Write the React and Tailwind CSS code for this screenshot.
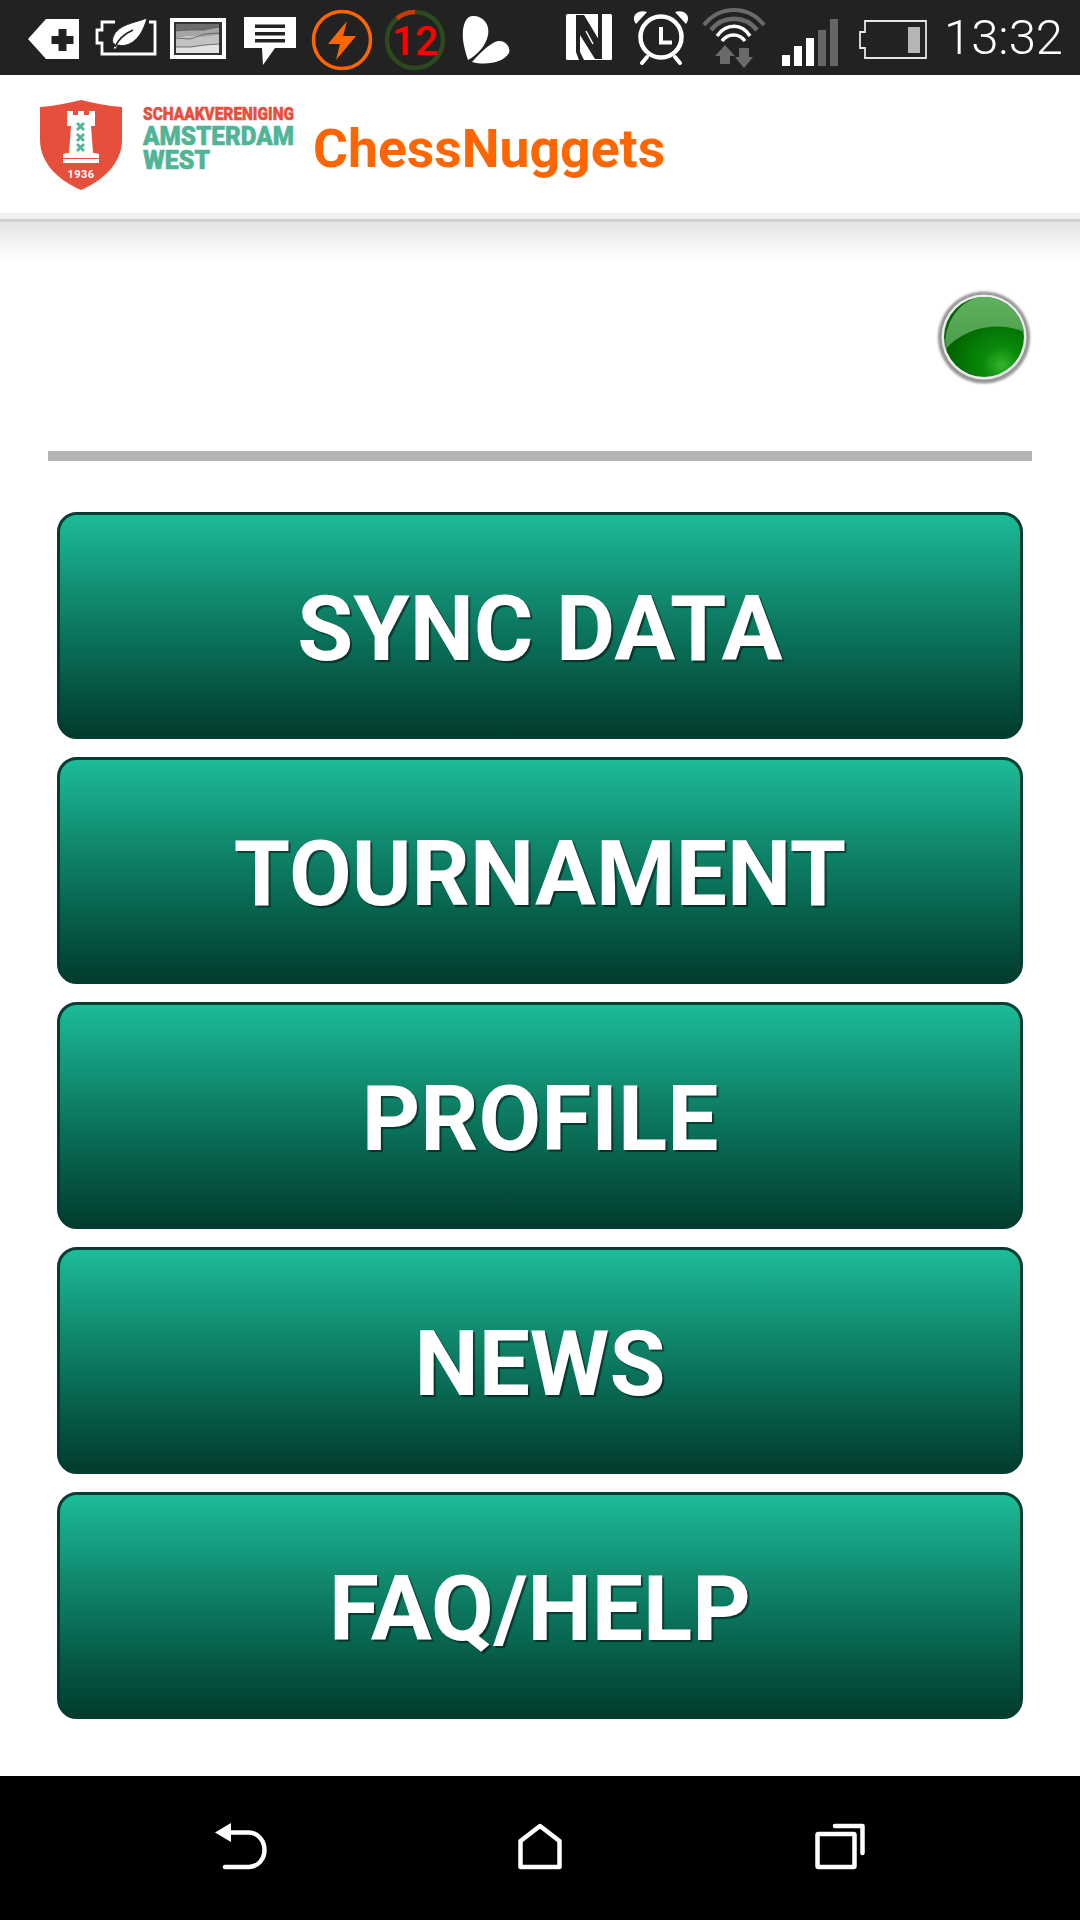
import React from 'react';

const FONT = "font-['Roboto','Liberation_Sans',sans-serif]";

// every status icon is drawn in page coordinates, so the cells just sit next to each other
const Cell = ({ x, w, children }) => (
  <svg width={w} height={75} viewBox={`${x} 0 ${w} 75`} className="shrink-0">
    {children}
  </svg>
);

const StatusBar = () => (
  <div className="flex h-[75px] shrink-0 items-center bg-[#222222] pl-[20px]">
    <Cell x={20} w={70}>
      <path d="M28 39 46 19H79V59H46Z" fill="#fff" />
      <path d="M58.500 29h8v7h7v8h-7v7h-8v-7h-7v-8h7z" fill="#222" />
    </Cell>
    <Cell x={90} w={72}>
      <path d="M115 22H102V30H97V43H102V54H155V22H149" fill="none" stroke="#fff" strokeWidth="2.800" />
      <path d="M147 18C135 23 118 24 113 37 112 42 113 44 115 44L113 49H116L118 45C130 48 142 38 147 18Z" fill="#fff" stroke="#222" strokeWidth="1" />
      <path d="M115 47C118 40 124 34 133 30" fill="none" stroke="#222" strokeWidth="1.800" />
    </Cell>
    <Cell x={162} w={73}>
      <rect x="170" y="18" width="56" height="41" fill="#fff" />
      <rect x="174" y="22" width="48" height="33" fill="#333" />
      <rect x="176" y="24" width="43" height="29" fill="#e2e2e2" />
      <path d="M176 24H219V27L204 30 190 30 176 31Z" fill="#6c6c6c" />
      <path d="M176 31 190 30 204 30 219 27V35L205 37 190 36 176 38Z" fill="#a5a5a5" />
      <path d="M176 38 190 36 205 37 219 35V44L205 45 190 47 176 47Z" fill="#c2c2c2" />
      <path d="M176 31 190 30 204 30 219 27M176 38 190 39 205 34 219 33M176 47 190 47 205 45 219 44" fill="none" stroke="#555" strokeWidth="0.800" />
    </Cell>
    <Cell x={235} w={70}>
      <path d="M244 17H296V48H275L263 65 262 48H244Z" fill="#fff" />
      <path d="M255 24.500H285V28H255ZM255 32H285V35.500H255ZM255 39H285V42.500H255Z" fill="#222" />
    </Cell>
    <Cell x={305} w={73}>
      <circle cx="342" cy="40" r="28.500" fill="none" stroke="#ff6600" strokeWidth="3.500" />
      <path d="M347 21 328 44H340L336 60 356 36H343Z" fill="#ff6600" />
    </Cell>
    <Cell x={378} w={74}>
      <circle cx="415" cy="40" r="28" fill="none" stroke="#2c4a1c" strokeWidth="4.500" />
      <path d="M397 18.500A28 28 0 0 1 415 12" fill="none" stroke="#c93a08" strokeWidth="4.500" />
      <text x="415" y="55" textAnchor="middle" fontFamily="Roboto, sans-serif" fontSize="41" fontWeight="500" fill="#ff0000">12</text>
    </Cell>
    <Cell x={452} w={78}>
      <path d="M473 16C483 16 490 24 488 35 486 46 477 55 468 60 464 48 462 39 463 30 464 22 467 16 473 16Z" fill="#fff" />
      <path d="M472 62C481 52 490 43 498 41 505 40 511 47 509 53 504 62 487 66 472 62Z" fill="#fff" />
    </Cell>
    <Cell x={530} w={95}>
      <rect x="566" y="14" width="46" height="46" rx="1.500" fill="#fff" />
      <path d="M576 15H584L602 45V59H595L580 35V52L584 60H579L576 52Z" fill="#222" />
      <path d="M598 14H602V59H598Z" fill="#222" />
      <path d="M586 31 593 44" fill="none" stroke="#fff" strokeWidth="1.500" />
    </Cell>
    <Cell x={625} w={70}>
      <circle cx="661" cy="37" r="20.500" fill="none" stroke="#fff" strokeWidth="4.500" />
      <path d="M661 27V42.500H672" fill="none" stroke="#fff" strokeWidth="4" />
      <path d="M636 24C630 16 638 9 647 12ZM686 24C692 16 684 9 675 12Z" fill="#fff" />
      <path d="M647 57 642 63M675 57 680 63" stroke="#fff" strokeWidth="4" strokeLinecap="round" />
    </Cell>
    <Cell x={695} w={80}>
      <path d="M704 25C720 5 748 5 764 25" fill="none" stroke="#6a6a6a" strokeWidth="4" />
      <path d="M711 30C723 15 745 15 757 30" fill="none" stroke="#6a6a6a" strokeWidth="4.500" />
      <path d="M717 36C726 23 742 23 750 36M722 41C728 33 739 33 745 41" fill="none" stroke="#fff" strokeWidth="3.500" />
      <path d="M725 45 735 56H730V64H720V56H715Z" fill="#6a6a6a" />
      <path d="M739 48H749V57H753L744 68 735 57H739Z" fill="#6a6a6a" />
    </Cell>
    <Cell x={775} w={70}>
      <path d="M782 55H790V66H782ZM794 46H802V66H794ZM806 38H814V66H806Z" fill="#fff" />
      <path d="M818 30H826V66H818ZM830 19H838V66H830Z" fill="#666" />
    </Cell>
    <Cell x={845} w={90}>
      <path d="M865 21H926V58H865V48H860V32H865Z" fill="none" stroke="#e6e6e6" strokeWidth="1.800" />
      <rect x="908" y="27" width="12" height="26" fill="#b5b5b5" />
    </Cell>
    <span className={`ml-[9px] text-[49px] leading-none font-light text-white ${FONT}`}>13:32</span>
  </div>
);

const ClubLogo = () => (
  <svg width={258} height={110} viewBox="40 90 258 110" className="shrink-0 overflow-visible">
    <path d="M40 107C55 106 68 103 81 100 94 103 107 106 122 107V140C122 165 100 182 81 190 62 182 40 165 40 140Z" fill="#e74f3d" />
    <path d="M67 111H73V115H78V111H84V115H89V111H95V126H91L93 153H95L99 154V158H63V154L67 153H69L71 126H67Z" fill="#fff" />
    <path d="M63 159H99V163H63Z" fill="#fff" />
    <path d="M77 123 84 130M84 123 77 130M77 134 84 141M84 134 77 141M77 144 84 151M84 144 77 151" fill="none" stroke="#4fb596" strokeWidth="2.800" />
    <text x="81" y="178" textAnchor="middle" fontFamily="Roboto, sans-serif" fontSize="11" fontWeight="700" letterSpacing="0.500" fill="#fff">1936</text>
    <text x="143" y="120" textLength="151" lengthAdjust="spacingAndGlyphs" fontFamily="Roboto, sans-serif" fontSize="18" fontWeight="900" stroke="#e74f3d" strokeWidth="0.500" fill="#e74f3d">SCHAAKVERENIGING</text>
    <text x="143" y="145" textLength="151" lengthAdjust="spacingAndGlyphs" fontFamily="Roboto, sans-serif" fontSize="25" fontWeight="900" stroke="#4fb596" strokeWidth="0.600" fill="#4fb596">AMSTERDAM</text>
    <text x="143" y="169" textLength="67" lengthAdjust="spacingAndGlyphs" fontFamily="Roboto, sans-serif" fontSize="25" fontWeight="900" stroke="#4fb596" strokeWidth="0.600" fill="#4fb596">WEST</text>
  </svg>
);

const Header = () => (
  <>
    <div className="flex h-[138px] shrink-0 items-center bg-white pl-[40px] pt-[1px]">
      <ClubLogo />
      <span className={`ml-[15px] mt-[8px] text-[53.500px] leading-none font-bold text-[#ff6600] ${FONT}`}>ChessNuggets</span>
    </div>
    <div className="h-[6px] shrink-0 bg-[#f0f0f0]" />
    <div className="h-[3px] shrink-0 bg-[#d0d0d0]" />
  </>
);

const StatusLight = () => (
  <svg width={96} height={96} viewBox="0 0 96 96">
    <defs>
      <radialGradient id="lamp" cx="0.72" cy="0.85" r="0.65">
        <stop offset="0" stopColor="#33b52c" />
        <stop offset="0.35" stopColor="#0a8a0a" />
        <stop offset="1" stopColor="#006600" />
      </radialGradient>
      <linearGradient id="gloss" x1="0" y1="0" x2="0" y2="1">
        <stop offset="0" stopColor="#5fb05f" />
        <stop offset="1" stopColor="#4c9c4c" />
      </linearGradient>
      <filter id="soft"><feGaussianBlur stdDeviation="0.800" /></filter>
    </defs>
    <circle cx="48" cy="48.500" r="46" fill="#969696" filter="url(#soft)" />
    <circle cx="48" cy="48" r="42.500" fill="#ececec" />
    <circle cx="48" cy="48" r="40" fill="url(#lamp)" />
    <path d="M10 60C6 38 23 8 48 8 68 8 86 24 88 43 72 36 54 36 39 41 28 45 17 51 10 60Z" fill="url(#gloss)" />
  </svg>
);

const MenuButton = ({ label }) => (
  <button className="flex h-[227px] w-full items-center justify-center rounded-[20px] border-[3px] border-[#033d31] bg-linear-to-b from-[#1cbc99] to-[#023c2e] pt-[8px]">
    <span className={`text-[91px] leading-none font-bold text-white [text-shadow:2px_2px_1px_rgba(0,0,0,0.5)] ${FONT}`}>{label}</span>
  </button>
);

const NavBar = () => (
  <div className="flex h-[144px] shrink-0 items-start bg-black pl-[215px] pt-[47px]">
    <svg width={52} height={48} viewBox="0 0 52 48">
      <path d="M0 9.500 16 0V19Z" fill="#fff" />
      <path d="M14 9.500H34C43 9.500 49.500 18 49.500 27S43 44 34 44H10" fill="none" stroke="#fff" strokeWidth="4.500" strokeLinecap="round" />
    </svg>
    <svg width={44} height={48} viewBox="0 0 44 48" className="ml-[251px]">
      <path d="M2.500 44V18L22 3 41.500 18V44Z" fill="none" stroke="#fff" strokeWidth="4.500" strokeLinejoin="round" />
    </svg>
    <svg width={50} height={48} viewBox="0 0 50 48" className="ml-[253px]">
      <rect x="2.500" y="11" width="37" height="33" rx="1" fill="none" stroke="#fff" strokeWidth="4.500" strokeLinejoin="round" />
      <path d="M20 3H47.500V30" fill="none" stroke="#fff" strokeWidth="4.500" strokeLinecap="round" strokeLinejoin="round" />
    </svg>
  </div>
);

const MENU = ['SYNC DATA', 'TOURNAMENT', 'PROFILE', 'NEWS', 'FAQ/HELP'];

export default function App() {
  return (
    <div className="flex h-[1920px] w-[1080px] flex-col overflow-hidden bg-white">
      <StatusBar />
      <Header />
      <main className="flex-1 bg-[linear-gradient(#e4e4e4,#ffffff_38px)]">
        <div className="flex justify-end pr-[48px] pt-[67px]">
          <StatusLight />
        </div>
        <div className="mx-[48px] mt-[66px] h-[10px] bg-[#b3b3b3]" />
        <div className="mx-[57px] mt-[51px] flex flex-col gap-[18px]">
          {MENU.map((label) => (
            <MenuButton key={label} label={label} />
          ))}
        </div>
      </main>
      <NavBar />
    </div>
  );
}
